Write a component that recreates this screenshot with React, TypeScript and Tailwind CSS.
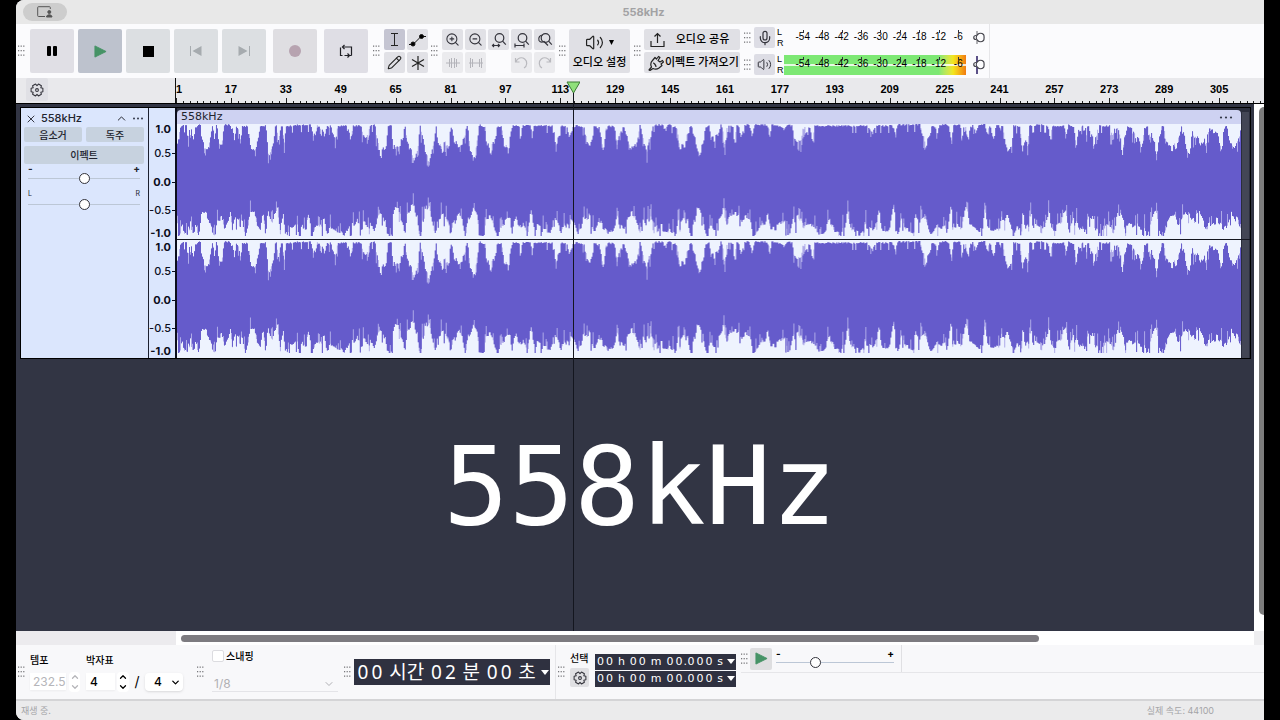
import type { ReactNode } from "react";
import { ChevronDown, ChevronUp, Mic, Pencil, Volume2, X, ZoomIn, ZoomOut } from "lucide-react";

// x, y pairs of the upper edge of the wave
const upper = [
  177, 146, 179, 131, 181, 126, 186, 125, 188, 140, 190, 128, 193, 141, 196, 127, 200, 125, 202, 143, 204, 148, 207, 148,
  210, 138, 212, 126, 214, 136, 216, 125, 219, 143, 222, 143, 224, 125, 229, 125, 232, 130, 234, 139, 236, 126, 240, 140,
  243, 126, 248, 127, 250, 145, 252, 153, 256, 149, 258, 138, 260, 126, 265, 126, 268, 150, 270, 153, 273, 141, 275, 126,
  278, 141, 281, 126, 284, 144, 286, 126, 310, 125, 315, 139, 318, 126, 324, 137, 327, 126, 335, 137, 338, 126, 345, 125,
  350, 138, 353, 126, 360, 126, 366, 140, 370, 126, 374, 124, 377, 136, 379, 150, 381, 154, 385, 148, 388, 126, 391, 126,
  393, 146, 396, 151, 399, 150, 402, 136, 405, 127, 407, 140, 410, 152, 414, 160, 417, 150, 420, 126, 423, 140, 426, 155,
  429, 159, 432, 150, 436, 127, 438, 142, 441, 150, 445, 146, 449, 144, 451, 127, 454, 140, 458, 149, 461, 147, 464, 135,
  467, 126, 470, 148, 475, 159, 477, 145, 480, 125, 484, 127, 487, 142, 490, 151, 494, 145, 497, 127, 501, 127, 504, 143,
  508, 150, 511, 130, 513, 126, 518, 126, 520, 136, 523, 126, 530, 125, 532, 140, 534, 126, 553, 126, 556, 146, 559, 140,
  561, 126, 567, 127, 570, 137, 573, 127, 577, 126, 584, 128, 588, 145, 590, 149, 593, 135, 594, 126, 599, 128, 601, 137,
  604, 149, 606, 132, 608, 126, 614, 127, 618, 143, 620, 135, 623, 128, 627, 138, 631, 147, 634, 149, 638, 137, 640, 126,
  643, 140, 648, 148, 650, 135, 654, 125, 663, 125, 665, 132, 668, 125, 677, 128, 680, 146, 685, 144, 688, 130, 691, 127,
  694, 140, 699, 154, 703, 148, 706, 128, 709, 126, 712, 140, 718, 138, 721, 125, 725, 140, 728, 125, 732, 126, 735, 140,
  738, 126, 742, 138, 745, 126, 749, 125, 752, 136, 755, 125, 767, 125, 770, 136, 772, 125, 782, 127, 784, 132, 787, 125,
  792, 126, 794, 138, 797, 143, 801, 138, 803, 128, 806, 131, 809, 127, 813, 140, 815, 126, 868, 126, 871, 131, 873, 136,
  876, 126, 892, 126, 896, 137, 898, 125, 920, 125, 923, 135, 926, 146, 929, 141, 931, 126, 936, 128, 938, 135, 940, 125,
  948, 125, 952, 141, 954, 125, 960, 125, 962, 136, 965, 125, 969, 140, 971, 126, 976, 135, 979, 125, 985, 125, 988, 137,
  990, 126, 994, 136, 997, 125, 1003, 130, 1005, 143, 1008, 149, 1012, 143, 1014, 126, 1020, 127, 1023, 149, 1025, 143,
  1028, 146, 1030, 126, 1040, 125, 1048, 126, 1051, 139, 1053, 126, 1064, 126, 1067, 133, 1069, 125, 1074, 127, 1077, 146,
  1079, 132, 1086, 129, 1089, 126, 1091, 138, 1094, 142, 1097, 136, 1099, 126, 1110, 126, 1113, 135, 1116, 126, 1119, 134,
  1121, 142, 1123, 152, 1126, 135, 1128, 126, 1134, 130, 1138, 140, 1142, 148, 1146, 128, 1148, 126, 1151, 135, 1154, 145,
  1158, 153, 1160, 135, 1163, 127, 1166, 136, 1169, 148, 1173, 150, 1177, 146, 1180, 135, 1182, 127, 1185, 140, 1188, 150,
  1190, 153, 1193, 132, 1196, 136, 1199, 142, 1203, 148, 1206, 140, 1210, 132, 1216, 131, 1222, 146, 1225, 133, 1227, 126,
  1231, 144, 1235, 151, 1238, 145, 1242, 128,
];

// x, y pairs of the lower edge
const lower = [
  177, 219, 180, 233, 183, 226, 187, 235, 190, 218, 193, 230, 196, 228, 199, 235, 202, 217, 204, 213, 208, 215, 211, 221,
  213, 233, 216, 234, 218, 216, 222, 216, 225, 231, 229, 222, 231, 212, 233, 228, 236, 220, 240, 222, 243, 224, 246, 234,
  249, 222, 252, 212, 255, 210, 258, 222, 261, 226, 263, 212, 266, 231, 269, 214, 273, 220, 276, 210, 278, 206, 280, 226,
  284, 214, 286, 235, 290, 226, 294, 226, 297, 220, 300, 235, 303, 227, 307, 225, 310, 214, 313, 234, 318, 228, 325, 218,
  328, 232, 333, 228, 340, 230, 345, 234, 350, 224, 355, 222, 358, 217, 360, 226, 367, 224, 374, 226, 376, 230, 379, 216,
  383, 212, 386, 220, 388, 234, 391, 235, 395, 210, 399, 211, 403, 222, 405, 234, 408, 214, 411, 208, 415, 206, 418, 214,
  420, 234, 424, 218, 427, 206, 430, 204, 433, 222, 436, 233, 440, 216, 444, 212, 449, 220, 451, 235, 455, 222, 459, 213,
  463, 222, 466, 233, 470, 216, 474, 206, 477, 212, 480, 232, 484, 234, 488, 216, 492, 216, 496, 228, 499, 235, 503, 222,
  508, 218, 511, 220, 513, 232, 517, 216, 519, 226, 523, 222, 528, 234, 532, 209, 535, 225, 540, 226, 545, 230, 552, 230,
  556, 214, 559, 222, 562, 234, 565, 220, 569, 226, 572, 218, 575, 222, 580, 233, 585, 218, 590, 214, 595, 232, 600, 218,
  605, 226, 610, 230, 614, 234, 618, 216, 622, 228, 625, 230, 629, 215, 634, 213, 638, 224, 641, 231, 644, 215, 648, 222,
  652, 218, 655, 230, 662, 226, 670, 230, 676, 234, 680, 218, 685, 214, 689, 224, 692, 234, 696, 220, 698, 208, 703, 214,
  707, 236, 712, 226, 716, 230, 720, 216, 724, 210, 728, 220, 732, 214, 737, 214, 740, 212, 744, 218, 748, 216, 751, 220,
  754, 234, 760, 228, 765, 222, 769, 213, 772, 226, 780, 226, 786, 216, 790, 234, 795, 220, 799, 216, 805, 226, 811, 220,
  816, 230, 824, 230, 832, 220, 836, 234, 840, 234, 845, 228, 849, 214, 853, 228, 860, 232, 868, 226, 874, 228, 880, 212,
  884, 228, 890, 231, 895, 210, 899, 230, 903, 217, 907, 230, 914, 230, 917, 216, 922, 222, 927, 218, 932, 230, 938, 225,
  945, 226, 948, 232, 952, 209, 956, 226, 962, 228, 968, 208, 972, 226, 978, 228, 983, 230, 986, 208, 990, 228, 1000, 230,
  1004, 218, 1009, 216, 1014, 234, 1020, 226, 1024, 215, 1028, 226, 1034, 212, 1038, 228, 1044, 230, 1050, 214, 1055, 228,
  1062, 224, 1067, 210, 1071, 230, 1076, 220, 1084, 231, 1092, 216, 1098, 228, 1103, 234, 1108, 222, 1115, 230, 1120, 214,
  1128, 226, 1137, 224, 1144, 226, 1148, 234, 1157, 213, 1161, 230, 1166, 235, 1171, 214, 1176, 214, 1180, 228, 1188, 210,
  1194, 220, 1201, 214, 1208, 226, 1218, 220, 1226, 226, 1234, 212, 1239, 220, 1242, 224,
];

const START = 177;
const END = 1242;

// eased so that the dips get steep sides
const sample = (pts: number[], x: number) => {
  let i = 2;
  while (i < pts.length - 2 && pts[i] < x) i += 2;
  const t = Math.min(1, Math.max(0, (x - pts[i - 2]) / (pts[i] - pts[i - 2])));
  const s = t * t * (3 - 2 * t);
  return pts[i - 1] + (pts[i + 1] - pts[i - 1]) * s;
};

const noise = (n: number) => {
  const v = Math.sin(n * 127.1) * 43758.5453;
  return v - Math.floor(v);
};

// one step per pixel column, the solid wave falls short of the soft one in some columns
const wavePath = (solid: boolean) => {
  let d = "";
  for (let x = START; x < END; x++) {
    const y = sample(upper, x);
    const jump = y > 129 ? (noise(x >> 1) - 0.5) * 9 : noise(x) > 0.93 ? 7 : noise(x) * 2 - 1;
    const short = solid && y > 127 && noise(x + 5) > 0.72 ? noise(x + 7) * 12 : 0;
    d += `${d ? "L" : "M"}${x} ${Math.max(124, y + jump + short).toFixed(1)}H${x + 1}`;
  }
  for (let x = END; x > START; x--) {
    const y = sample(lower, x);
    const jump = (noise((x >> 1) + 40) - 0.4) * 8;
    const spike = noise(x + 11) > 0.93 ? 12 : 0;
    const short = solid && noise(x + 3) > 0.74 ? noise(x + 9) * 14 : 0;
    d += `L${x} ${Math.min(236, y + jump + spike - short).toFixed(1)}H${x - 1}`;
  }
  return d + "Z";
};

const softWave = wavePath(false);
const solidWave = wavePath(true);

const bars = Array.from({ length: 20 }, (_, i) => 1 + i * 16);
const levels = [-54, -48, -42, -36, -30, -24, -18, -12, -6];
const scale = ["1.0", "0.5", "0.0", "-0.5", "-1.0"];

const gear = Array.from({ length: 6 }, (_, k) =>
  [[-16, 7], [16, 7], [30, 5]].map(([a, r]) => {
    const rad = ((k * 60 + a) * Math.PI) / 180;
    return `${(8 + r * Math.cos(rad)).toFixed(2)},${(8 + r * Math.sin(rad)).toFixed(2)}`;
  })
)
  .flat()
  .join(" ");

const Gear = () => (
  <svg viewBox="0 0 16 16" className="size-[14px]" fill="none" stroke="#33333b" strokeWidth="1.2" strokeLinejoin="round">
    <polygon points={gear} />
    <circle cx="8" cy="8" r="1.6" />
  </svg>
);

const Grip = () => (
  <svg width="7" height="12" className="shrink-0" fill="#77777b">
    {[0, 1, 2].map((r) =>
      [0, 1, 2].map((c) => <rect key={`${r}${c}`} x={c * 2.6} y={r * 4.5 + 0.5} width="1.2" height="1.3" />)
    )}
  </svg>
);

const Big = ({ label, className = "bg-[#dcdfe2]", children }: { label: string; className?: string; children: ReactNode }) => (
  <button aria-label={label} className={`flex size-11 shrink-0 items-center justify-center rounded-xs ${className}`}>
    {children}
  </button>
);

const Small = ({ label, className = "bg-[#e1e1e6]", children }: { label: string; className?: string; children: ReactNode }) => (
  <button aria-label={label} className={`flex size-[21px] shrink-0 items-center justify-center rounded-xs ${className}`}>
    {children}
  </button>
);

const Lens = ({ children }: { children?: ReactNode }) => (
  <svg viewBox="0 0 16 16" className="size-4" fill="none" stroke="#33333b" strokeWidth="1.2">
    <circle cx="8.5" cy="6" r="4.3" />
    <path d="M11.6 9.2l3.2 3.4" />
    {children}
  </svg>
);

const Meter = ({ active }: { active?: boolean }) => (
  <div className="flex h-[27px] items-center">
    <Grip />
    <Small label={active ? "재생 미터" : "녹음 미터"} className="ml-[3px] bg-[#dddde5]">
      {active ? <Volume2 size={15} strokeWidth={1.6} color="#33333b" /> : <Mic size={16} strokeWidth={1.8} color="#33333b" />}
    </Small>
    <div className="ml-[2px] flex w-[7px] flex-col justify-between text-[9px] leading-[11px]">
      <span>L</span>
      <span>R</span>
    </div>
    <div className={`relative grid h-[20px] w-[182px] ${active ? "bg-linear-to-r from-[#7de874] from-85% via-[#f2e51c] via-93% to-[#f07a10]" : ""}`}>
      {active && <div className="absolute inset-x-0 top-[9px] h-[2px] bg-white/80" />}
      <div className="relative ml-[9px] grid w-[175px] grid-cols-9 text-center text-[10px] leading-[18px]">
        {levels.map((v) => (
          <span key={v} className="relative">
            <i className="absolute top-[2px] left-1/2 h-[3px] w-px bg-[#33333b]" />
            {v}
          </span>
        ))}
      </div>
    </div>
    <button aria-label="볼륨" className="ml-[5px]">
      <svg width="16" height="20" fill="none" stroke="#44444c" strokeWidth="1.2">
        <path d={active ? "M6 1v18" : "M6 3v13"} stroke={active ? "#5c5188" : "#66666c"} strokeWidth={active ? 2 : 1} />
        <path d="M12.500 6.500a4.200 4.200 0 1 0 0 6c.8-.8.8-5.200 0-6z" fill="#fbfbfd" />
        <path d="M5 7.500c-3 0-3 4 0 4" />
      </svg>
    </button>
  </div>
);

const slider =
  "h-[12px] w-full appearance-none bg-transparent [&::-webkit-slider-runnable-track]:h-px [&::-webkit-slider-runnable-track]:bg-[#bcc7d6] [&::-webkit-slider-thumb]:-mt-[5px] [&::-webkit-slider-thumb]:size-[11px] [&::-webkit-slider-thumb]:appearance-none [&::-webkit-slider-thumb]:rounded-full [&::-webkit-slider-thumb]:border [&::-webkit-slider-thumb]:border-solid [&::-webkit-slider-thumb]:border-[#33333b] [&::-webkit-slider-thumb]:bg-white";

const Play = ({ size }: { size: number }) => (
  <svg width={size} height={size} viewBox="0 0 14 14">
    <path d="M1 1l12 6-12 6z" fill="#469366" stroke="#469366" strokeLinejoin="round" />
  </svg>
);

const Digits = ({ text, className }: { text: string; className: string }) => (
  <span className="flex">
    {text.split("").map((c, i) => (
      <span key={i} className={c === "." ? "w-[3px]" : className}>
        {c}
      </span>
    ))}
  </span>
);

const Arrow = () => (
  <svg width="8" height="5">
    <path d="M0 0h8l-4 5z" fill="#fff" />
  </svg>
);

const SmallTime = () => (
  <div className="flex h-4 w-[141px] items-center justify-between bg-[#2f3140] px-px text-center font-['DejaVu_Sans'] text-[11px] leading-4 text-white">
    <Digits text="00" className="w-[9px]" />
    <span>h</span>
    <Digits text="00" className="w-[9px]" />
    <span>m</span>
    <Digits text="00.000" className="w-[9px]" />
    <span>s</span>
    <button aria-label="시간 형식">
      <Arrow />
    </button>
  </div>
);

const Spinner = ({ className }: { className: string }) => (
  <div className={`flex w-3 flex-col items-center ${className}`}>
    <button aria-label="증가">
      <ChevronUp size={10} strokeWidth={3} />
    </button>
    <button aria-label="감소">
      <ChevronDown size={10} strokeWidth={3} />
    </button>
  </div>
);

const TitleBar = () => (
  <header className="flex h-6 items-center bg-[#e8e8e8]">
    <div className="flex-1 pl-[7px]">
      <button aria-label="화면 공유" className="flex h-[18px] w-11 items-center justify-center rounded-full bg-[#cdcdcd]">
        <svg width="16" height="12" fill="none" stroke="#555">
          <path d="M8 10.5H1.5a.8.8 0 0 1-.8-.8V1.5a.8.8 0 0 1 .8-.8h11a.8.8 0 0 1 .8.8V3" />
          <circle cx="12.3" cy="6" r="1.5" fill="#555" />
          <path d="M9.5 11c0-3 5.500-3 5.500 0z" fill="#555" />
        </svg>
      </button>
    </div>
    <h1 className="text-[11px] font-bold text-[#a2a2a4]">558kHz</h1>
    <div className="flex-1" />
  </header>
);

const TopTools = () => (
  <div className="flex h-[54px] items-center bg-[#fbfbfd]">
    <div className="flex items-center pl-[2px]">
      <Grip />
      <div className="ml-[5px] flex gap-1">
        <Big label="일시정지" className="bg-[#e0dfe5]">
          <svg width="12" height="12">
            <rect x="1" y="1" width="4" height="10" rx="1" />
            <rect x="7" y="1" width="4" height="10" rx="1" />
          </svg>
        </Big>
        <Big label="재생" className="bg-[#bdc2cd]">
          <Play size={13} />
        </Big>
        <Big label="정지">
          <span className="size-[11px] bg-black" />
        </Big>
        <Big label="처음으로">
          <svg width="14" height="12" fill="#a6abaf">
            <path d="M1 1h1v10h-1zM12.500 1v10l-9-5z" />
          </svg>
        </Big>
        <Big label="끝으로">
          <svg width="14" height="12" fill="#a6abaf">
            <path d="M12 1h1v10h-1zM1.500 1v10l9-5z" />
          </svg>
        </Big>
      </div>
      <div className="ml-[7px] flex gap-[7px]">
        <Big label="녹음" className="bg-[#dfdee2]">
          <span className="size-3 rounded-full bg-[#b7a3b0]" />
        </Big>
        <Big label="반복" className="bg-[#dfdee5]">
          <svg width="14" height="14" fill="none" stroke="#1f1f25" strokeWidth="1.2">
            <path d="M3.500 11.500H1.500V3.500M4 3h8.500v6M12.500 11.500H5.500" />
            <path d="M5.500 1L3.500 3l2 2M8.500 9.500l2 2-2 2M12.500 9v2.500" />
          </svg>
        </Big>
      </div>
    </div>

    <div className="ml-[5px] flex items-center gap-1">
      <Grip />
      <div className="grid grid-cols-2 gap-[2px]">
        <Small label="선택 도구" className="bg-[#c5c5d2]">
          <svg width="11" height="15" fill="none" stroke="#222">
            <path d="M2 1.500h7M2 13.500h7M5.500 1.500v12" />
          </svg>
        </Small>
        <Small label="엔벨로프 도구">
          <svg width="17" height="14" stroke="#111">
            <path d="M0 11.500h4l8-8h5" fill="none" />
            <circle cx="4" cy="11" r="2" />
            <circle cx="12.500" cy="3.500" r="2" />
          </svg>
        </Small>
        <Small label="그리기 도구">
          <Pencil size={15} strokeWidth={1.7} color="#222" />
        </Small>
        <Small label="다중 도구">
          <svg width="14" height="14" stroke="#222" strokeWidth="1.200">
            <path d="M7 0v14M1 3.500l12 7M13 3.500l-12 7" />
          </svg>
        </Small>
      </div>
    </div>

    <div className="ml-[3px] flex items-center gap-1">
      <Grip />
      <div className="grid grid-cols-5 gap-[2px]">
        <Small label="확대">
          <ZoomIn size={15} strokeWidth={1.7} color="#33333b" />
        </Small>
        <Small label="축소">
          <ZoomOut size={15} strokeWidth={1.7} color="#33333b" />
        </Small>
        <Small label="선택 맞춤">
          <Lens>
            <path d="M1 13.500h8M3 12l-1.500 1.500 1.500 1.500M7 12l1.500 1.500-1.500 1.500" />
          </Lens>
        </Small>
        <Small label="프로젝트 맞춤">
          <Lens>
            <path d="M1 13.500h9M1 11.500v4M10 11.500v4" />
          </Lens>
        </Small>
        <Small label="확대 전환">
          <Lens>
            <path d="M6 3a4 4 0 0 0-4 5.500c1 1.500 3 2 5 1l4 4" />
          </Lens>
        </Small>
        <Small label="외부 다듬기" className="bg-[#ebebee]">
          <svg width="14" height="12" stroke="#b4b4ba">
            <path d="M0 6h14M3.500 2v8M5.500 1v10M8.500 1v10M10.500 2v8" />
          </svg>
        </Small>
        <Small label="무음 처리" className="bg-[#ebebee]">
          <svg width="14" height="12" stroke="#b4b4ba">
            <path d="M0 6h14M1.500 1v10M3.500 2v8M10.500 2v8M12.500 1v10" />
          </svg>
        </Small>
        <Small label="실행 취소" className="col-start-4 bg-[#ebebee]">
          <svg width="15" height="15" fill="none" stroke="#b9b9be" strokeWidth="1.200">
            <path d="M1.500 3v4h4M2 6.500a5.500 5.500 0 1 1 8 6.500" />
          </svg>
        </Small>
        <Small label="다시 실행" className="bg-[#ebebee]">
          <svg width="15" height="15" fill="none" stroke="#b9b9be" strokeWidth="1.200">
            <path d="M13.500 3v4h-4M13 6.500a5.500 5.500 0 1 0-8 6.500" />
          </svg>
        </Small>
      </div>
    </div>

    <div className="ml-[4px] flex items-center gap-[3px]">
      <Grip />
      <button className="flex h-11 w-[61px] flex-col items-center justify-center gap-[2px] rounded-xs bg-[#e0e0e5] text-[11px] leading-4 font-medium whitespace-nowrap">
        <span className="flex items-center gap-[5px]">
          <Volume2 size={19} strokeWidth={1.5} color="#222" />
          <svg width="5" height="5">
            <path d="M0 0h5l-2.500 5z" />
          </svg>
        </span>
        오디오 설정
      </button>
    </div>

    <div className="ml-[4px] flex items-center gap-[3px]">
      <Grip />
      <div className="flex flex-col gap-[2px] text-[11px] font-medium whitespace-nowrap">
        <button className="flex h-[21px] w-24 items-center rounded-xs bg-[#e0e0e5] pl-[6px]">
          <svg width="15" height="16" fill="none" stroke="#222" strokeWidth="1.200">
            <path d="M1 9v5.500h13V9M7.500 11V2M4.500 4.500l3-3 3 3" />
          </svg>
          <span className="flex-1 text-center">오디오 공유</span>
        </button>
        <button className="flex h-[21px] w-24 items-center gap-px rounded-xs bg-[#e0e0e5] pl-[4px]">
          <svg width="16" height="16" className="shrink-0" fill="none" stroke="#222" strokeWidth="1.200" strokeLinejoin="round">
            <path d="M1 15l2.500-3c-1-2-.5-5 1-6.500l2.500-3 1.500 1.500 2-2.500 1.500 1-2 3 2 1.500 2.500-1.500 1 1.500-2.500 2 1 1.500-3 2.500c-2 1.500-4 1.500-6 .5L2 15.500zM5 8c1 0 3 2 3 4" />
          </svg>
          이펙트 가져오기
        </button>
      </div>
    </div>

    <div className="ml-[4px] h-full w-[246px] border-r border-[#e6e6e9] font-['Liberation_Sans']">
      <Meter />
      <Meter active />
    </div>
  </div>
);

const Ruler = () => (
  <div className="flex h-[26px] border-b border-black bg-[#e9e9ec]">
    <div className="w-40 shrink-0 border-r border-[#111] pl-[10px]">
      <button aria-label="타임라인 옵션" className="flex h-[23px] w-[22px] items-center justify-center rounded-xs bg-[#e0e0e5]">
        <Gear />
      </button>
    </div>
    <div className="mr-[-10px] grid flex-1 grid-cols-20 font-['Liberation_Sans'] text-[11px] font-bold">
      {bars.map((n) => (
        <div key={n} className="flex flex-col justify-between">
          <span className={n === 1 ? "pt-[3px] leading-4" : "-ml-5 w-10 pt-[3px] text-center leading-4"}>{n}</span>
          <div className="flex items-end justify-between">
            {[5, 2, 2, 2, 2, 2, 2, 2].map((h, i) => (
              <i key={i} className="flex-1">
                <i className="block w-px bg-[#222]" style={{ height: h }} />
              </i>
            ))}
          </div>
        </div>
      ))}
    </div>
  </div>
);

const TrackPanel = () => (
  <div className="w-32 shrink-0 border-r border-[#1c2030] bg-[#dbe6fd] pr-1 pl-[3px] text-[10px] text-[#22242e]">
    <div className="flex h-[19px] items-center pt-[2px] pl-px">
      <button aria-label="트랙 닫기">
        <X size={12} strokeWidth={1.8} />
      </button>
      <span className="ml-1 flex-1 text-[11px] font-medium">558kHz</span>
      <button aria-label="접기">
        <ChevronUp size={13} strokeWidth={1.8} />
      </button>
      <button aria-label="트랙 메뉴" className="ml-[4px]">
        <svg width="12" height="3" fill="#33384a">
          <circle cx="2" cy="1.500" r="1" />
          <circle cx="6" cy="1.500" r="1" />
          <circle cx="10" cy="1.500" r="1" />
        </svg>
      </button>
    </div>
    <div className="grid grid-cols-2 gap-x-1 gap-y-1 font-medium">
      <button className="h-[15px] rounded-xs bg-[#c7d2df] leading-[14px]">음소거</button>
      <button className="h-[15px] rounded-xs bg-[#c7d2df] leading-[14px]">독주</button>
      <button className="col-span-2 h-[18px] rounded-xs bg-[#c7d2df] leading-4">이펙트</button>
    </div>
    <label className="block px-1">
      <span className="flex h-2 justify-between font-bold leading-2">
        <span>-</span>
        <span>+</span>
      </span>
      <input type="range" aria-label="음량" defaultValue={50} className={`block ${slider}`} />
    </label>
    <label className="block px-1 pt-[6px]">
      <span className="flex h-2 justify-between text-[7px] leading-2">
        <span>L</span>
        <span>R</span>
      </span>
      <input type="range" aria-label="팬" defaultValue={50} className={`block ${slider}`} />
    </label>
  </div>
);

const VerticalScale = () => (
  <div className="w-[28px] shrink-0 border-r-2 border-[#0c0e1c] bg-[#dbe6fd] pt-[14px] text-[11px] text-[#0c0e1c]">
    {[0, 1].map((ch) => (
      <div key={ch} className="grid h-[118px] grid-rows-[14px_34px_24px_32px_14px]">
        {scale.map((v, i) => (
          <span key={v} className={`flex items-center justify-end gap-px leading-none ${i % 2 ? "font-medium" : "font-bold"}`}>
            {v}
            <i className={i === 0 || i === 4 ? "w-[3px]" : "h-px w-[3px] bg-[#0c0e1c]"} />
          </span>
        ))}
      </div>
    ))}
  </div>
);

const Track = () => (
  <section className="mr-[3px] ml-1 flex h-[252px] border border-black bg-[#2b2e3c]">
    <TrackPanel />
    <VerticalScale />
    <div className="flex min-w-0 flex-1 flex-col pt-[2px] pr-[9px]">
      <div className="flex h-[14px] items-center justify-between rounded-t-sm bg-[#ced2f2] pr-2 pl-1">
        <span className="font-['DejaVu_Sans'] text-[11px] leading-[14px] text-[#22242e]">558kHz</span>
        <button aria-label="클립 메뉴">
          <svg width="14" height="3" fill="#33384a">
            <circle cx="2" cy="1.500" r="1.100" />
            <circle cx="7" cy="1.500" r="1.100" />
            <circle cx="12" cy="1.500" r="1.100" />
          </svg>
        </button>
      </div>
      <svg viewBox="177 124 1065 234" preserveAspectRatio="none" className="min-h-0 w-full flex-1 overflow-visible bg-[#eef3fe]">
        {[0, 117].map((y) => (
          <g key={y} transform={`translate(0 ${y})`}>
            <path d={softWave} fill="#aeaae8" />
            <path d={solidWave} fill="#655bcb" />
          </g>
        ))}
        <path d="M1243 112h7v246h-7z" fill="#434655" />
        <path d="M177 239.500h1074" stroke="#14161f" />
      </svg>
    </div>
  </section>
);

const BottomTools = () => (
  <div className="flex h-[56px] border-b-2 border-[#d4d4d6] bg-[#f8f8fa]">
    <div className="flex items-center pl-[2px]">
      <Grip />
      <div className="ml-[5px] flex gap-[6px] text-[12px]">
        <div className="w-[50px]">
          <label htmlFor="tempo" className="block text-[10px] leading-[14px] font-medium">템포</label>
          <div className="mt-[5px] flex items-center gap-[3px] text-[#b5b5b9]">
            <input id="tempo" defaultValue="232.55" className="h-[17px] w-[36px] bg-white pl-[3px] shadow-xs" />
            <Spinner className="rounded-sm bg-white" />
          </div>
        </div>
        <div>
          <label htmlFor="beats" className="block text-[10px] leading-[14px] font-medium">박자표</label>
          <div className="mt-[5px] flex items-center">
            <input id="beats" defaultValue="4" className="h-[17px] w-[29px] bg-white pl-1 font-medium shadow-xs" />
            <Spinner className="ml-[2px] rounded-sm bg-white" />
            <span className="w-4 text-center text-[14px] leading-4">/</span>
            <div className="relative">
              <select aria-label="박자 단위" className="h-[18px] w-[38px] appearance-none rounded-sm bg-white pl-[9px] font-medium shadow-sm">
                <option>4</option>
              </select>
              <ChevronDown size={11} strokeWidth={2.8} className="pointer-events-none absolute top-[4px] right-[2px]" />
            </div>
          </div>
        </div>
      </div>
    </div>

    <div className="ml-[14px] flex items-center">
      <Grip />
      <div className="ml-[8px] w-[126px] pb-1">
        <label className="flex items-center gap-[2px] text-[10px] leading-[14px] font-medium">
          <input type="checkbox" className="size-3 appearance-none rounded-xs border border-[#dcdce0] bg-white" />
          스내핑
        </label>
        <div className="relative mt-[12px]">
          <select aria-label="스냅 단위" disabled className="block h-[17px] w-full appearance-none border-b border-[#e4e4e8] pl-[2px] text-[12px] text-[#b0b0b4]">
            <option>1/8</option>
          </select>
          <ChevronDown size={12} color="#b0b0b4" className="pointer-events-none absolute top-[3px] right-[3px]" />
        </div>
      </div>
    </div>

    <div className="ml-[6px] flex items-center border-r border-[#e6e6e9] pr-[5px]">
      <Grip />
      <div className="ml-[3px] flex h-[26px] w-[196px] items-center justify-between bg-[#2f3140] pr-[1px] pl-[2px] text-center font-['Noto_Sans','Noto_Sans_CJK_KR'] text-[19px] leading-6 text-white">
        <Digits text="00" className="w-[14px]" />
        <span>시간</span>
        <Digits text="02" className="w-[14px]" />
        <span>분</span>
        <Digits text="00" className="w-[14px]" />
        <span>초</span>
        <button aria-label="시간 형식">
          <Arrow />
        </button>
      </div>
    </div>

    <div className="flex items-center pl-[2px]">
      <Grip />
      <div className="ml-[5px] flex w-[25px] flex-col gap-[3px] pb-[6px] text-[10px] leading-[14px] font-medium">
        선택
        <button aria-label="선택 옵션" className="flex size-[19px] items-center justify-center rounded-xs bg-[#e0e0e3]">
          <Gear />
        </button>
      </div>
      <div className="flex flex-col gap-px pb-[4px]">
        <SmallTime />
        <SmallTime />
      </div>
    </div>

    <div className="ml-[5px] flex-1">
      <div className="flex h-[28px] border-b border-[#e6e6e9]">
        <div className="flex w-[161px] items-center border-r border-[#e0e0e3]">
          <Grip />
          <button aria-label="속도 재생" className="ml-[2px] flex size-[22px] items-center justify-center rounded-xs bg-[#dedee0]">
            <Play size={13} />
          </button>
          <label className="ml-[4px] block w-[118px]">
            <span className="flex h-[8px] justify-between text-[10px] leading-2 font-bold">
              <span>-</span>
              <span>+</span>
            </span>
            <input type="range" aria-label="재생 속도" defaultValue={32} className={`block ${slider}`} />
          </label>
        </div>
      </div>
    </div>
  </div>
);

const App = () => {
  return (
    <div className="flex min-h-screen flex-col bg-black px-4 font-[Inter,'Noto_Sans_CJK_KR',sans-serif] text-black">
      <div className="flex flex-1 flex-col overflow-hidden rounded-l-lg bg-[#fbfbfd]">
        <TitleBar />
        <TopTools />
        <div className="relative flex flex-1 flex-col">
          <Ruler />
          <div className="flex flex-1">
            <main className="flex-1 bg-[#323544] pt-[3px]">
              <Track />
              <p className="mt-[64px] pl-[10px] text-center font-['DejaVu_Sans_Mono'] text-[109px] leading-32 text-white">558kHz</p>
            </main>
            <div className="w-[10px] bg-white pt-[3px] pl-[5px]">
              <div className="h-[508px] rounded-l-full bg-[#7d7d7d]" />
            </div>
          </div>
          <svg width="14" className="absolute top-[3px] left-[550px] h-[calc(100%-3px)] overflow-hidden">
            <path d="M7.500 12V2000" stroke="#14161f" />
            <path d="M1 1h13l-6.500 11z" fill="#8fe07a" stroke="#3d7a35" />
          </svg>
        </div>
        <div className="flex h-[14px] bg-white">
          <div className="w-40 bg-[#ecebee]" />
          <div className="flex-1 py-[4px] pl-[5px]">
            <div className="h-[7px] w-[80%] rounded-full bg-[#7d7b80]" />
          </div>
          <div className="w-[10px] bg-[#eeeef0]" />
        </div>
        <BottomTools />
        <footer className="flex h-[19px] items-center justify-between bg-[#ebebec] pr-[50px] pl-[5px] text-[9px] text-[#a5a5a8]">
          <span>재생 중.</span>
          <span>실제 속도: 44100</span>
        </footer>
      </div>
    </div>
  );
};

export default App;
